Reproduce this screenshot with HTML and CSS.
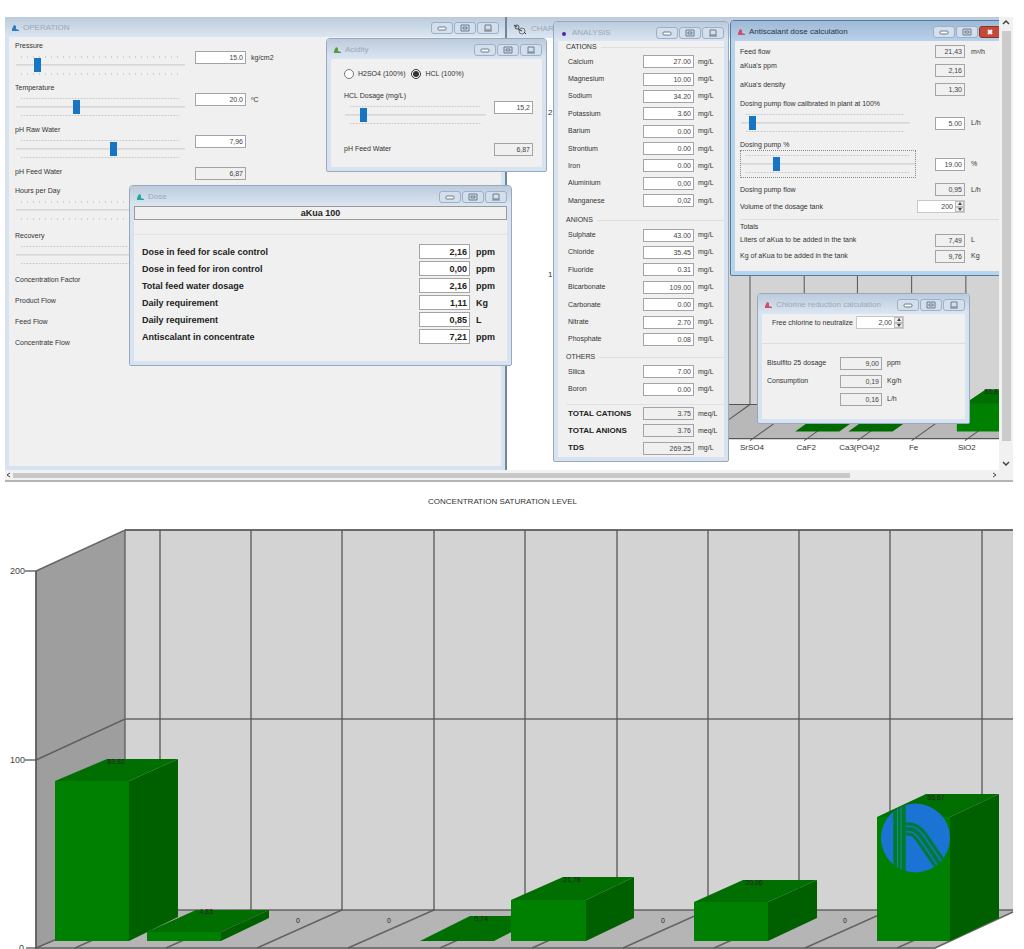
FILE: index.html
```html
<!DOCTYPE html>
<html lang="en">
<head>
<meta charset="utf-8">
<title>aKua dosing</title>
<link rel="stylesheet" href="styles.css">
</head>
<body>
<svg class="defs" aria-hidden="true">
  <symbol id="min" viewBox="0 0 10 8"><rect x="1" y="3" width="8" height="3" rx="1" fill="#fff" stroke="#6b7a8c"/></symbol>
  <symbol id="max" viewBox="0 0 10 8"><path d="M1 1h8v6H1zM3 3h4v2H3z" fill="none" stroke="#6b7a8c"/></symbol>
  <symbol id="cls" viewBox="0 0 10 8"><path d="M2 1h6v5H2zM1 7h8" fill="none" stroke="#6b7a8c"/></symbol>
  <symbol id="x" viewBox="0 0 10 8"><path d="M3 2l4 4M7 2L3 6" stroke="#fff" stroke-width="2"/></symbol>
  <symbol id="drop" viewBox="0 0 8 8"><path d="M1 7V5l2-4 2 1v3l3 1v1z" fill="currentColor"/></symbol>
</svg>

<main class="desktop">
  <section class="win chart-win">
    <header class="bar">
      <svg class="gear" viewBox="0 0 14 12"><circle cx="4" cy="4" r="2" fill="none" stroke="#555"/><circle cx="9" cy="8" r="3" fill="none" stroke="#777"/><path d="M1 2l3 2M5 6l4 2M11 9l2 2" stroke="#333"/></svg>
      <h2>CHART</h2>
    </header>
    <svg class="mini" viewBox="508 38 491 432" preserveAspectRatio="xMinYMin slice">
      <rect x="700" y="60" width="300" height="343" fill="#d3d3d3"/>
      <path d="M700 403h300v34H700z" fill="#b8b8b8"/>
      <g stroke="#555" fill="none"><path d="M750 60V403M804 60V403M857 60V403M911 60V403M965 60V403M700 403H1000M700 437H1000M750 403L729 418"/><path d="M778 419L750 439M832 419L804 439M885 419L857 439M939 419L911 439M992 419L964 439"/></g>
      <path d="M795 430l14-10h44l-14 10zM848 430l14-10h44l-14 10z" fill="#006a00"/>
      <path d="M956 408L985 388H1000V430H956z" fill="#008000"/><path d="M964 402L985 388H1000V402z" fill="#006e00"/>
      <g class="cat"><text x="752" y="448">SrSO4</text><text x="806" y="448">CaF2</text><text x="859" y="448">Ca3(PO4)2</text><text x="913" y="448">Fe</text><text x="966" y="448">SiO2</text><text x="551" y="115">2</text><text x="551" y="276">1</text></g>
      <text class="val" x="990" y="393">53,8</text>
    </svg>
  </section>

  <section class="win operation">
    <header class="bar"><svg class="ico blue"><use href="#drop"/></svg><h2>OPERATION</h2>
      <div class="caps"><button aria-label="Minimize"><svg><use href="#min"/></svg></button><button aria-label="Maximize"><svg><use href="#max"/></svg></button><button aria-label="Close"><svg><use href="#cls"/></svg></button></div></header>
    <div class="body">
      <div class="knob"><label for="pr">Pressure</label><span class="ticks"><input type="range" id="pr" value="11"></span><input class="num" aria-label="Pressure value" value="15.0"><span class="unit">kg/cm2</span></div>
      <div class="knob"><label for="te">Temperature</label><span class="ticks fine"><input type="range" id="te" value="35"></span><input class="num" aria-label="Temperature value" value="20.0"><span class="unit">ºC</span></div>
      <div class="knob"><label for="ph">pH Raw Water</label><span class="ticks fine"><input type="range" id="ph" value="58"></span><input class="num" aria-label="pH value" value="7,96"></div>
      <label class="line"><span>pH Feed Water</span><input class="num ro" readonly value="6,87"></label>
      <div class="knob wide"><label for="hd">Hours per Day</label><span class="ticks"><input type="range" id="hd" value="90"></span></div>
      <div class="knob wide"><label for="re">Recovery</label><span class="ticks fine"><input type="range" id="re" value="80"></span></div>
      <p class="tag">Concentration Factor</p>
      <p class="tag">Product Flow</p>
      <p class="tag">Feed Flow</p>
      <p class="tag">Concentrate Flow</p>
    </div>
  </section>

  <section class="win acidity">
    <header class="bar"><svg class="ico green"><use href="#drop"/></svg><h2>Acidity</h2>
      <div class="caps"><button aria-label="Minimize"><svg><use href="#min"/></svg></button><button aria-label="Maximize"><svg><use href="#max"/></svg></button><button aria-label="Close"><svg><use href="#cls"/></svg></button></div></header>
    <div class="body">
      <div class="radios"><label><input type="radio" name="acid">H2SO4 (100%)</label><label><input type="radio" name="acid" checked>HCL (100%)</label></div>
      <div class="knob"><label for="hc">HCL Dosage (mg/L)</label><span class="ticks fine"><input type="range" id="hc" value="11"></span><input class="num" aria-label="HCL dosage value" value="15,2"></div>
      <label class="line"><span>pH Feed Water</span><input class="num ro" readonly value="6,87"></label>
    </div>
  </section>

  <section class="win dose">
    <header class="bar"><svg class="ico teal"><use href="#drop"/></svg><h2>Dose</h2>
      <div class="caps"><button aria-label="Minimize"><svg><use href="#min"/></svg></button><button aria-label="Maximize"><svg><use href="#max"/></svg></button><button aria-label="Close"><svg><use href="#cls"/></svg></button></div></header>
    <div class="body">
      <h3 class="product">aKua 100</h3>
      <div class="rows">
        <label class="line"><span>Dose in feed for scale control</span><input class="num" value="2,16"><span>ppm</span></label>
        <label class="line"><span>Dose in feed for iron control</span><input class="num" value="0,00"><span>ppm</span></label>
        <label class="line"><span>Total feed water dosage</span><input class="num" value="2,16"><span>ppm</span></label>
        <label class="line"><span>Daily requirement</span><input class="num" value="1,11"><span>Kg</span></label>
        <label class="line"><span>Daily requirement</span><input class="num" value="0,85"><span>L</span></label>
        <label class="line"><span>Antiscalant in concentrate</span><input class="num" value="7,21"><span>ppm</span></label>
      </div>
    </div>
  </section>

  <section class="win analysis">
    <header class="bar"><svg class="ico violet" viewBox="0 0 8 8"><circle cx="4" cy="5" r="2" fill="currentColor"/></svg><h2>ANALYSIS</h2>
      <div class="caps"><button aria-label="Minimize"><svg><use href="#min"/></svg></button><button aria-label="Maximize"><svg><use href="#max"/></svg></button><button aria-label="Close"><svg><use href="#cls"/></svg></button></div></header>
    <div class="body">
      <h3 class="group">CATIONS</h3>
      <div class="ions nine">
        <label class="line"><span>Calcium</span><input class="num" value="27.00"><span>mg/L</span></label>
        <label class="line"><span>Magnesium</span><input class="num" value="10.00"><span>mg/L</span></label>
        <label class="line"><span>Sodium</span><input class="num" value="34.20"><span>mg/L</span></label>
        <label class="line"><span>Potassium</span><input class="num" value="3.60"><span>mg/L</span></label>
        <label class="line"><span>Barium</span><input class="num" value="0.00"><span>mg/L</span></label>
        <label class="line"><span>Strontium</span><input class="num" value="0.00"><span>mg/L</span></label>
        <label class="line"><span>Iron</span><input class="num" value="0.00"><span>mg/L</span></label>
        <label class="line"><span>Aluminium</span><input class="num" value="0,00"><span>mg/L</span></label>
        <label class="line"><span>Manganese</span><input class="num" value="0,02"><span>mg/L</span></label>
      </div>
      <h3 class="group">ANIONS</h3>
      <div class="ions seven">
        <label class="line"><span>Sulphate</span><input class="num" value="43.00"><span>mg/L</span></label>
        <label class="line"><span>Chloride</span><input class="num" value="35.45"><span>mg/L</span></label>
        <label class="line"><span>Fluoride</span><input class="num" value="0.31"><span>mg/L</span></label>
        <label class="line"><span>Bicarbonate</span><input class="num" value="109.00"><span>mg/L</span></label>
        <label class="line"><span>Carbonate</span><input class="num" value="0.00"><span>mg/L</span></label>
        <label class="line"><span>Nitrate</span><input class="num" value="2.70"><span>mg/L</span></label>
        <label class="line"><span>Phosphate</span><input class="num" value="0.08"><span>mg/L</span></label>
      </div>
      <h3 class="group">OTHERS</h3>
      <div class="ions two">
        <label class="line"><span>Silica</span><input class="num" value="7.00"><span>mg/L</span></label>
        <label class="line"><span>Boron</span><input class="num" value="0.00"><span>mg/L</span></label>
      </div>
      <div class="ions three">
        <label class="line"><b>TOTAL CATIONS</b><input class="num ro" readonly value="3.75"><span>meq/L</span></label>
        <label class="line"><b>TOTAL ANIONS</b><input class="num ro" readonly value="3.76"><span>meq/L</span></label>
        <label class="line"><b>TDS</b><input class="num ro" readonly value="269.25"><span>mg/L</span></label>
      </div>
    </div>
  </section>

  <section class="win chlorine">
    <header class="bar"><svg class="ico red"><use href="#drop"/></svg><h2>Chlorine reduction calculation</h2>
      <div class="caps"><button aria-label="Minimize"><svg><use href="#min"/></svg></button><button aria-label="Maximize"><svg><use href="#max"/></svg></button><button aria-label="Close"><svg><use href="#cls"/></svg></button></div></header>
    <div class="body">
      <div class="free"><label for="fc">Free chlorine to neutralize</label><span class="spin"><input class="num" id="fc" value="2,00"><span class="arrows"><button aria-label="Up"></button><button class="dn" aria-label="Down"></button></span></span></div>
      <div class="result">
        <label class="line"><span>Bisulfito 25 dosage</span><input class="num ro" readonly value="9,00"><span>ppm</span></label>
        <label class="line"><span>Consumption</span><input class="num ro" readonly value="0,19"><span>Kg/h</span></label>
        <label class="line"><span></span><input class="num ro" aria-label="Consumption in litres" readonly value="0,16"><span>L/h</span></label>
      </div>
    </div>
  </section>

  <section class="win active antiscalant">
    <header class="bar"><svg class="ico red"><use href="#drop"/></svg><h2>Antiscalant dose calculation</h2>
      <div class="caps"><button aria-label="Minimize"><svg><use href="#min"/></svg></button><button aria-label="Maximize"><svg><use href="#max"/></svg></button><button class="close" aria-label="Close"><svg><use href="#x"/></svg></button></div></header>
    <div class="body">
      <label class="line"><span>Feed flow</span><input class="num ro" readonly value="21,43"><span>m³/h</span></label>
      <label class="line high"><span>aKua's ppm</span><input class="num ro" readonly value="2,16"></label>
      <label class="line high"><span>aKua's density</span><input class="num ro" readonly value="1,30"></label>
      <div class="knob"><label for="df">Dosing pump flow calibrated in plant at 100%</label><span class="ticks fine"><input type="range" id="df" value="5"></span><input class="num" aria-label="Pump flow value" value="5.00"><span class="unit">L/h</span></div>
      <div class="knob"><label for="dp">Dosing pump %</label><span class="ticks fine focus"><input type="range" id="dp" value="19"></span><input class="num" aria-label="Pump percent value" value="19.00"><span class="unit">%</span></div>
      <label class="line"><span>Dosing pump flow</span><input class="num ro" readonly value="0,95"><span>L/h</span></label>
      <div class="line"><label for="vt">Volume of the dosage tank</label><span class="spin"><input class="num" id="vt" value="200"><span class="arrows"><button aria-label="Up"></button><button class="dn" aria-label="Down"></button></span></span></div>
      <h3 class="totals">Totals</h3>
      <label class="line sum"><span>Liters of aKua to be added in the tank</span><input class="num ro" readonly value="7,49"><span>L</span></label>
      <label class="line sum"><span>Kg of aKua to be added in the tank</span><input class="num ro" readonly value="9,76"><span>Kg</span></label>
    </div>
  </section>

  <div class="vscroll"><svg viewBox="0 0 8 5"><path d="M1 4l3-3 3 3" fill="none" stroke="#444" stroke-width="1.5"/></svg><i></i><svg viewBox="0 0 8 5"><path d="M1 1l3 3 3-3" fill="none" stroke="#444" stroke-width="1.5"/></svg></div>
  <div class="hscroll"><svg viewBox="0 0 5 6"><path d="M4 1L1 3l3 2" fill="none" stroke="#444"/></svg><i></i><svg viewBox="0 0 5 6"><path d="M1 1l3 2-3 2" fill="none" stroke="#444"/></svg></div>
</main>

<section class="saturation">
  <h1>CONCENTRATION SATURATION LEVEL</h1>
  <svg class="plot" viewBox="0 520 1024 429" role="img" aria-label="Concentration saturation level">
    <path d="M36 571L125 530V910L36 949z" fill="#9e9e9e"/>
    <path d="M125 530H1013V910H125z" fill="#d3d3d3"/>
    <path d="M125 910H1013V912L935 949H36z" fill="#b5b5b5"/>
    <g fill="none" stroke="#555" stroke-opacity=".85">
      <path d="M125 530H1013M36 571V949" stroke-width="2"/>
      <path d="M36 571L125 530V910L36 948M36 760L125 719H1013M125 910H1013M1013 912L935 948H36M25 571H36M25 760H36M26 948H36" stroke-width="1.4"/>
      <path d="M160 530V910L75 948M251 530V910L166 948M342 530V910L257 948M434 530V910L348 948M525 530V910L440 948M617 530V910L532 948M708 530V910L623 948M799 530V910L714 948M890 530V910L805 948M982 530V910L897 948" stroke-width="1.5"/>
    </g>
    <g fill="#008000"><path d="M55 781H129V941H55z"/><path d="M147 932H221V941H147z"/></g>
    <g fill="#006e00"><path d="M55 781L107 759H178L129 781z"/><path d="M147 932L196 910H269L221 932z"/><path d="M420 941L470 916H543L494 941z"/></g>
    <g fill="#006000"><path d="M129 781L178 759V917L129 941z"/><path d="M221 932L269 910V918L221 941z"/></g>
    <path d="M511 900H586V941H511zM694 902H768V941H694zM877 817H950V941H877z" fill="#008000"/>
    <path d="M511 900L563 877H634L586 900zM694 902L743 880H817L768 902zM877 817L926 794H999L950 817z" fill="#006e00"/>
    <path d="M586 900L634 877V918L586 941zM768 902L817 880V918L768 941zM950 817L999 794V918L950 941z" fill="#006000"/>
    <clipPath id="disc"><circle cx="915.5" cy="838" r="34.5"/></clipPath>
    <circle cx="915.5" cy="838" r="34.5" fill="#1b74d4"/>
    <g clip-path="url(#disc)" fill="none">
      <path d="M899.500 800V880" stroke="#007a2c" stroke-width="12.500"/>
      <path d="M897.500 800V880M901 800V880" stroke="#1a8a8a"/>
      <path d="M906 829h3Q916 829 922 838L944 870" stroke="#007a3c" stroke-width="13.500"/>
      <path d="M906 829h3Q916 829 922 838L944 870" stroke="#1b74c4" stroke-width="7"/>
      <path d="M906 829h3Q916 829 922 838L944 870" stroke="#007a3c" stroke-width="4"/>
    </g>
    <g class="axis"><text x="25" y="574">200</text><text x="25" y="763">100</text><text x="24" y="951">0</text></g>
    <g class="val"><text x="116" y="764">83,82</text><text x="206" y="914">4,83</text><text x="481" y="921">0,74</text><text x="572" y="882">21,78</text><text x="754" y="885">20,06</text><text x="936" y="800">65,67</text><text x="298" y="923">0</text><text x="389" y="923">0</text><text x="663" y="923">0</text><text x="845" y="923">0</text></g>
  </svg>
</section>
</body>
</html>
```
FILE: styles.css
```css
* { box-sizing: border-box; }
body { margin: 0; background: #fff; color: #333; font: 7px/10px "Liberation Sans", Arial, sans-serif; overflow: hidden; }
h1, h2, h3, p { margin: 0; font-size: inherit; font-weight: normal; }
.defs { position: absolute; width: 0; height: 0; }
button { padding: 0; }

.desktop { position: relative; height: 465px; margin: 17px 11px 0 5px; overflow: hidden; border-bottom: 2px solid #b4b4b4; background: #fff; }

/* windows */
.win { position: absolute; display: flex; flex-direction: column; padding: 0 4px 4px; border: 1px solid #98a9be; border-radius: 4px 4px 2px 2px; background: #d7e3f1; overflow: hidden; }
.bar { display: flex; flex: none; align-items: center; gap: 4px; height: 20px; margin: 0 -4px; padding: 2px 4px 0 6px; background: linear-gradient(#bccbdc, #dbe6f2); color: #9aa8b8; }
.bar h2 { flex: 1; font-size: 8px; white-space: nowrap; }
.ico { width: 8px; height: 8px; }
.blue { color: #2b7cc0; } .green { color: #5a9a3a; } .teal { color: #2aa79b; } .violet { color: #5522b0; } .red { color: #d0506a; }
.caps { display: flex; gap: 1px; }
.caps button { display: flex; align-items: center; justify-content: center; width: 22px; height: 12px; border: 1px solid #9db0c6; border-radius: 3px; background: #d3dfec; }
.caps svg { width: 10px; height: 8px; }
.body { flex: 1; background: #f0f0f0; }
.active { border-color: #4d7ea6; background: #b9d3ea; }
.active .bar { background: linear-gradient(#9fb9d6, #b9d1ea); color: #27364a; }
.caps .close { width: 22px; border-color: #8c3328; background: #c5493a; }

/* fields */
.num { width: 100%; height: 13px; padding: 0 2px; border: 1px solid #a4a4a4; border-radius: 0; background: #fff; color: #444; font: inherit; text-align: right; }
.ro { background: #f0f0f0; }
.line { display: grid; align-items: center; white-space: nowrap; }
.knob { display: grid; grid-template-rows: 10px 28px; align-items: center; white-space: nowrap; }
.knob label { grid-column: 1 / -1; }
.ticks { display: flex; align-items: center; height: 28px; padding: 0 1px; background: repeating-linear-gradient(90deg, #cfcfcf 0 1px, transparent 1px 6px) 6px 5px / calc(100% - 12px) 2px no-repeat, repeating-linear-gradient(90deg, #cfcfcf 0 1px, transparent 1px 6px) 6px 22px / calc(100% - 12px) 2px no-repeat; }
.fine { background: repeating-linear-gradient(90deg, #c6c6c6 0 1px, #e2e2e2 1px 3px) 6px 5px / calc(100% - 12px) 1px no-repeat, repeating-linear-gradient(90deg, #c6c6c6 0 1px, #e2e2e2 1px 3px) 6px 22px / calc(100% - 12px) 1px no-repeat; }
.focus { outline: 1px dotted #888; outline-offset: -1px; }
input[type="range"] { appearance: none; width: 100%; height: 14px; margin: 0; background: linear-gradient(#d2d2d2, #e6e6e6) 0 6px / 100% 2px no-repeat; }
input[type="range"]::-webkit-slider-thumb { appearance: none; width: 7px; height: 14px; border: 0; border-radius: 0; background: #1874c4; }
.spin { display: flex; height: 13px; border: 1px solid #c8c8c8; background: #fff; }
.spin .num { flex: 1; min-width: 0; height: auto; border: 0; background: none; }
.arrows { display: flex; flex-direction: column; width: 9px; }
.arrows button { display: grid; flex: 1; place-items: center; border: 1px solid #bbb; background: #eee; min-height: 0; }
.arrows button::before { content: ""; border: 2px solid transparent; border-top: 0; border-bottom: 3px solid #444; }
.arrows .dn::before { border-bottom: 0; border-top: 3px solid #444; }

/* operation */
.operation { left: 0; top: 0; width: 502px; height: 453px; border-width: 0 2px 0 0; border-right-color: #71859b; border-radius: 0; }
.operation .bar { padding-right: 6px; }
.operation .body { padding: 4px 0 0 6px; }
.operation .knob { grid-template-columns: 171px 51px 1fr; column-gap: 9px; height: 42px; align-items: start; }
.operation .unit { margin-left: -4px; line-height: 13px; }
.operation .knob.wide { grid-template-columns: 400px; height: 45px; }
.operation .line { grid-template-columns: 171px 51px; column-gap: 9px; height: 19px; align-items: start; }
.operation .tag { height: 21px; line-height: 8px; }

/* chart */
.chart-win { left: 502px; top: 0; width: 493px; height: 453px; padding: 0; border: 0; border-radius: 0; background: #fff; }
.chart-win .bar { height: 21px; margin: 0; }
.gear { width: 14px; height: 12px; }
.mini { display: block; flex: 1; min-height: 0; width: 100%; }
.cat { font-size: 8px; fill: #333; text-anchor: middle; }

/* acidity */
.acidity { left: 321px; top: 21px; width: 221px; height: 134px; }
.acidity .body { padding: 9px 0 0 13px; }
.radios { display: flex; gap: 6px; height: 23px; }
.radios label { display: flex; align-items: center; gap: 4px; height: 12px; }
.radios input { width: 10px; height: 10px; margin: 0; accent-color: #333; }
.acidity .knob, .acidity .line { grid-template-columns: 143px 39px; column-gap: 7px; }
.acidity .knob { height: 48px; align-content: start; }
.acidity .knob .num { align-self: start; }
.acidity .line { height: 20px; }

/* dose */
.dose { left: 124px; top: 168px; width: 383px; height: 181px; }
.product { height: 14px; border: 1px solid #999; font-size: 9px; line-height: 12px; font-weight: bold; text-align: center; color: #222; }
.rows { display: grid; grid-auto-rows: 17px; margin-top: 14px; padding: 8px 0 0 8px; border-top: 1px solid #e4e4e4; font-size: 9px; font-weight: bold; color: #222; }
.rows .line { grid-template-columns: 271px 51px 1fr; column-gap: 6px; }
.rows .num { height: 15px; color: #222; }

/* analysis */
.analysis { left: 548px; top: 4px; width: 176px; height: 441px; }
.analysis .bar { height: 19px; }
.analysis .body { display: flex; flex-direction: column; padding: 0 0 0 8px; }
.group { display: flex; align-items: center; gap: 4px; height: 12px; font-size: 7px; }
.group::after { content: ""; flex: 1; height: 1px; background: #dedede; }
.ions { display: grid; grid-auto-rows: 1fr; padding-left: 2px; }
.ions .line { grid-template-columns: 71px 51px 1fr; column-gap: 4px; }
.ions b { font-size: 8px; color: #222; }
.nine { flex: 9; margin-bottom: 5px; } .seven { flex: 7; margin-bottom: 3px; } .two { flex: 2; margin-bottom: 6px; } .three { flex: 3; border-top: 1px solid #e2e2e2; }

/* chlorine */
.chlorine { left: 752px; top: 276px; width: 213px; height: 131px; }
.free { display: flex; align-items: center; gap: 4px; height: 30px; padding: 0 0 12px 10px; border-bottom: 1px solid #ddd; }
.free .spin { width: 48px; }
.free label { width: 80px; white-space: nowrap; }
.result { padding: 10px 0 0 5px; }
.result .line { grid-template-columns: 68px 42px 1fr; column-gap: 5px; height: 18px; }

/* antiscalant */
.antiscalant { left: 725px; top: 3px; width: 276px; height: 256px; }
.antiscalant .body { padding: 1px 0 0 5px; }
.antiscalant .line, .antiscalant .knob { grid-template-columns: 171px 48px 1fr; column-gap: 6px; }
.antiscalant .line { height: 19px; }
.antiscalant .high > span { align-self: start; }
.antiscalant .num { justify-self: end; width: 30px; }
.antiscalant .knob { margin-bottom: 3px; }
.antiscalant .knob + .line, .antiscalant .knob + .line + .line { height: 17px; }
.antiscalant .focus { width: 176px; }
.antiscalant .spin .num { width: auto; }
.totals { margin-top: 4px; padding-top: 2px; border-top: 1px solid #ddd; }
.antiscalant .sum { height: 16px; }

/* scrollbars */
.vscroll { position: absolute; right: 0; top: 0; bottom: 10px; display: flex; flex-direction: column; align-items: center; width: 14px; padding: 3px 0 4px; background: #f1f1f1; }
.vscroll svg { width: 8px; height: 5px; }
.vscroll i { flex: 1; width: 9px; margin: 6px 0 20px; background: #cbcbcb; }
.hscroll { position: absolute; left: 0; right: 0; bottom: 0; display: flex; align-items: center; height: 10px; padding: 0 16px 0 1px; background: #f1f1f1; }
.hscroll svg { width: 5px; height: 6px; }
.hscroll i { flex: 1; height: 5px; margin-right: 142px; margin-left: 2px; background: #c8c8c8; }

/* saturation chart */
.saturation { padding-top: 13px; }
.saturation h1 { height: 25px; padding-right: 19px; font-size: 8px; line-height: 14px; text-align: center; }
.plot { display: block; width: 100%; }
.axis { font-size: 9px; fill: #444; text-anchor: end; }
.val { font-size: 7px; fill: #222; text-anchor: middle; }
```
